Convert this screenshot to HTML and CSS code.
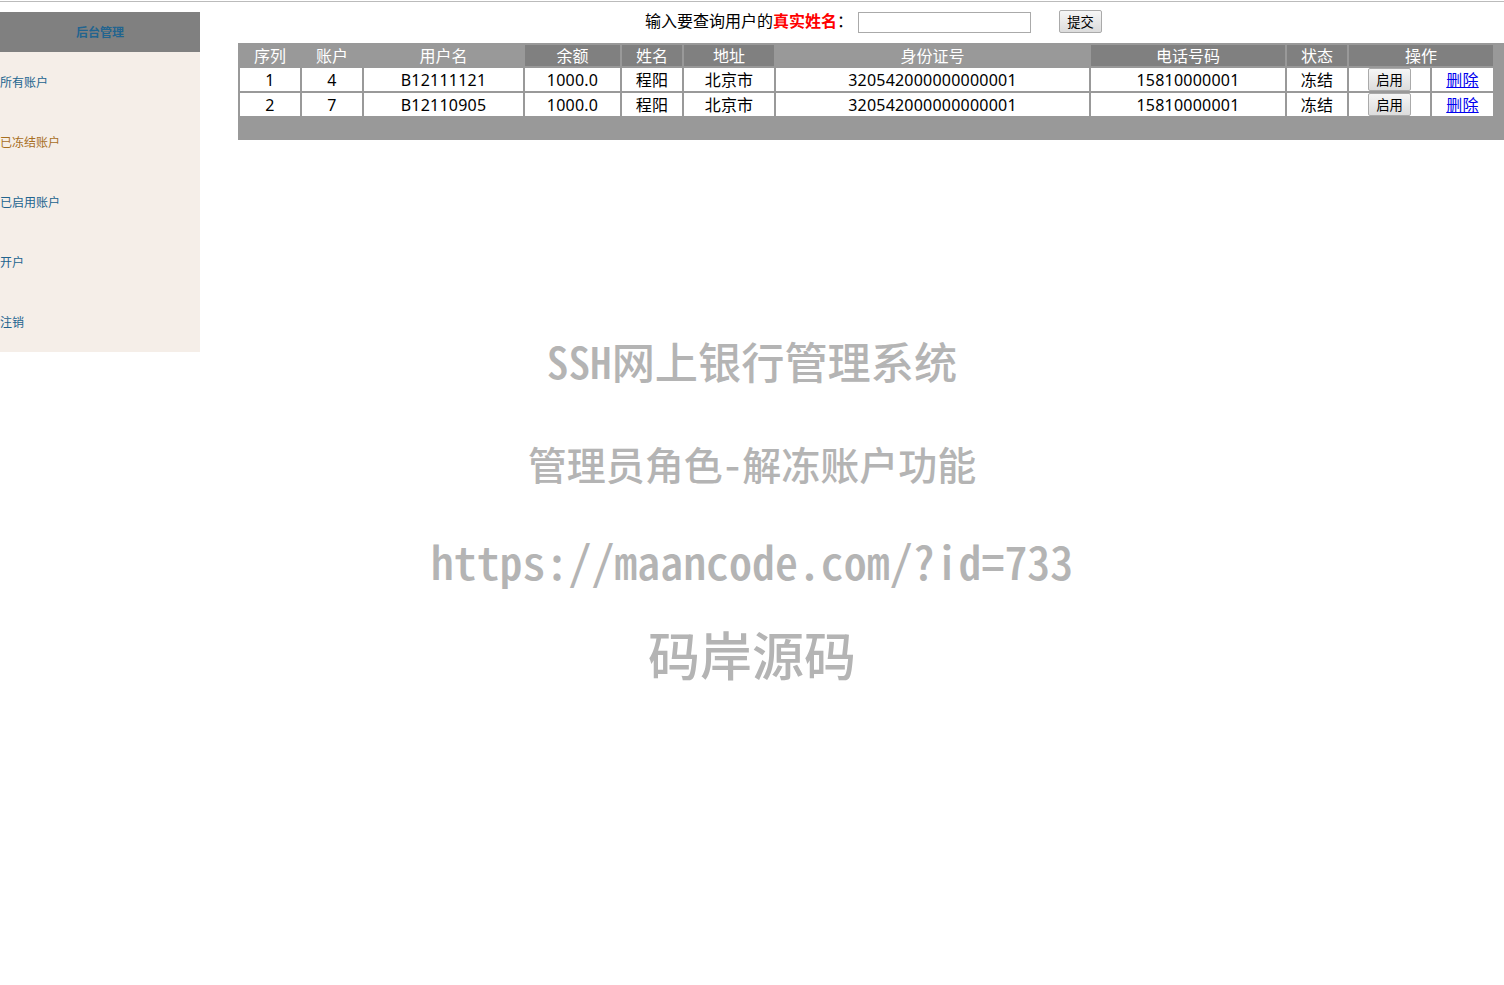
FILE: index.html
```html
<!DOCTYPE html>
<html lang="zh-CN">
    <head>
        <title>SSH网上银行管理系统</title>
        <meta charset="utf-8">
        <link rel="stylesheet" href="styles.css">
    </head>
    <body>
        <hr class="topline">

        <div class="page">
            <div class="sidenav">
                <div class="sidenav-title"><a href="#">后台管理</a></div>
                <a href="#">所有账户</a>
                <a href="#" class="active">已冻结账户</a>
                <a href="#">已启用账户</a>
                <a href="#">开户</a>
                <a href="#">注销</a>
            </div>

            <div class="content">
                <form class="search">
                    <label for="realname">输入要查询用户的<span class="red">真实姓名</span>：</label>
                    <input type="text" id="realname" name="realname">
                    <button type="button" class="btn btn-submit">提交</button>
                </form>

                <div class="table-box">
                    <table>
                        <colgroup>
                            <col class="w-id">
                            <col class="w-id">
                            <col class="w-user">
                            <col class="w-money">
                            <col class="w-id">
                            <col class="w-addr">
                            <col class="w-card">
                            <col class="w-phone">
                            <col class="w-id">
                            <col class="w-act">
                            <col class="w-del">
                        </colgroup>
                        <tr>
                            <th>序列</th>
                            <th>账户</th>
                            <th>用户名</th>
                            <th class="dark">余额</th>
                            <th class="dark">姓名</th>
                            <th class="dark">地址</th>
                            <th>身份证号</th>
                            <th class="dark">电话号码</th>
                            <th class="dark">状态</th>
                            <th class="dark" colspan="2">操作</th>
                        </tr>
                        <tr>
                            <td>1</td>
                            <td>4</td>
                            <td>B12111121</td>
                            <td>1000.0</td>
                            <td>程阳</td>
                            <td>北京市</td>
                            <td>320542000000000001</td>
                            <td>15810000001</td>
                            <td>冻结</td>
                            <td class="cell-btn"><button type="button" class="btn">启用</button></td>
                            <td><a href="#">删除</a></td>
                        </tr>
                        <tr>
                            <td>2</td>
                            <td>7</td>
                            <td>B12110905</td>
                            <td>1000.0</td>
                            <td>程阳</td>
                            <td>北京市</td>
                            <td>320542000000000001</td>
                            <td>15810000001</td>
                            <td>冻结</td>
                            <td class="cell-btn"><button type="button" class="btn">启用</button></td>
                            <td><a href="#">删除</a></td>
                        </tr>
                    </table>
                </div>
            </div>
        </div>

        <!-- watermark over the page -->
        <div class="watermark">
            <div class="mark-1">SSH网上银行管理系统</div>
            <div class="mark-2">管理员角色-解冻账户功能</div>
            <div class="mark-3">https://maancode.com/?id=733</div>
            <div class="mark-4">码岸源码</div>
        </div>
    </body>
</html>
```

FILE: styles.css
```css
* {
    box-sizing: border-box;
}
body {
    margin: 0;
    font-family: "Noto Sans", "Noto Sans CJK SC", sans-serif;
    font-size: 16px;
    color: #000;
    background-color: #fff;
}
.topline {
    margin: 0;
    margin-top: 1px;
    border: none;
    height: 1px;
    background-color: #bbb;
}
.page {
    display: flex;
    align-items: flex-start;
}
/* Left menu */
.sidenav {
    flex: none;
    width: 200px;
    height: 340px;
    margin-top: 10px;
    background-color: #f5eee8;
    font-size: 12px;
}
.sidenav a {
    display: block;
    height: 60px;
    line-height: 62px;
    color: #22648f;
    text-decoration: none;
}
.sidenav a.active {
    color: #a86f1f;
}
.sidenav-title {
    height: 40px;
    text-align: center;
    background-color: #808080;
}
.sidenav-title a {
    height: 40px;
    line-height: 42px;
    font-weight: bold;
}
/* Search and table */
.content {
    flex: 1;
    margin-left: 38px;
    min-width: 0;
}
.search {
    display: flex;
    align-items: center;
    height: 41px;
    padding-left: 407px;
    padding-bottom: 2px;
}
.search label {
    margin-bottom: 3px;
}
.red {
    color: #f00;
    font-weight: bold;
}
.search input {
    width: 173px;
    height: 21px;
    margin-left: 5px;
    margin-top: 1px;
    border: 1px solid #aaa;
    padding: 0 4px;
}
.btn {
    font-family: inherit;
    font-size: 13.33px;
    height: 23px;
    width: 43px;
    padding: 0;
    border: 1px solid #aaa;
    border-radius: 2px;
    color: #000;
    background: linear-gradient(#f6f6f6, #dcdcdc);
}
.btn-submit {
    margin-left: 28px;
}
.table-box {
    height: 97px;
    background-color: #999;
}
table {
    border-collapse: separate;
    border-spacing: 2px;
    table-layout: fixed;
    width: 1257px;
}
th {
    height: 21px;
    padding: 2px 0 0;
    font-weight: normal;
    color: #fff;
    line-height: 19px;
}
th.dark {
    background-color: #808080;
}
td {
    height: 23px;
    padding: 2px 0 0;
    text-align: center;
    line-height: 21px;
    letter-spacing: 0.22px;
    background-color: #fff;
}
td.cell-btn {
    padding: 0;
    vertical-align: top;
    line-height: 0;
}
.w-id {
    width: 60px;
}
.w-user {
    width: 159px;
}
.w-money {
    width: 95px;
}
.w-addr {
    width: 90px;
}
.w-card {
    width: 313px;
}
.w-phone {
    width: 194px;
}
.w-act {
    width: 81px;
}
.w-del {
    width: 61px;
}
td a {
    color: #00e;
}
/* Watermark */
.watermark {
    position: absolute;
    top: 0;
    left: 0;
    width: 100%;
    padding-top: 334px;
    display: flex;
    flex-direction: column;
    align-items: center;
    font-family: "Noto Sans CJK SC", sans-serif;
    font-feature-settings: "hwid";
    font-weight: 500;
    color: #b4b4b4;
    pointer-events: none;
}
.mark-1 {
    font-size: 43.2px;
    line-height: 52px;
}
.mark-2 {
    margin-top: 51px;
    font-size: 39px;
    line-height: 52px;
}
.mark-3 {
    margin-top: 45px;
    font-size: 45.9px;
    line-height: 52px;
}
.mark-4 {
    margin-top: 33px;
    font-size: 52px;
    line-height: 70px;
}
```
